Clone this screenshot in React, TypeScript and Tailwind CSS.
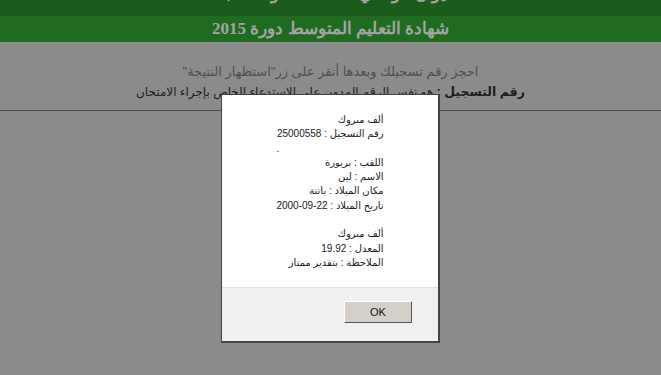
import React from 'react'

const sans = { fontFamily: '"Liberation Sans", "DejaVu Sans", Arial, sans-serif' }

const lines: (string | null)[] = [
  'ألف مبروك',
  'رقم التسجيل : 25000558',
  '.',
  'اللقب : بريورة',
  'الاسم : لين',
  'مكان الميلاد : باتنة',
  'تاريخ الميلاد : 22-09-2000',
  null,
  'ألف مبروك',
  'المعدل : 19.92',
  'الملاحظة : بتقدير ممتاز',
]

export default function App() {
  return (
    <div className="relative w-full h-[375px] overflow-hidden bg-[#8b8b8b] font-['Liberation_Sans','DejaVu_Sans',sans-serif]">
      {/* header bands */}
      <div className="h-[16px] bg-[#1b5b1c] overflow-hidden">
        <div dir="rtl" className="-mt-[19px] text-center font-bold text-[17px] leading-[26px] text-[#a3a3a3] font-['Liberation_Serif','DejaVu_Serif',serif]">
          الديوان الوطني للامتحانات والمسابقات
        </div>
      </div>
      <div dir="rtl" className="h-[26px] bg-[#1f6b20] text-center font-bold text-[17px] leading-[26px] text-[#a3a3a3] font-['Liberation_Serif','DejaVu_Serif',serif]">
        شهادة التعليم المتوسط دورة 2015
      </div>

      {/* instructions */}
      <div dir="rtl" className="pt-[19px] pb-[7px] text-center border-b border-[#4b4b4b]">
        <div className="text-[13px] leading-[21px] text-[#505050]">
          احجز رقم تسجيلك وبعدها أنقر على زر"استظهار النتيجة"
        </div>
        <div className="text-[12px] leading-[21px] text-[#1e1e1e]">
          <span className="font-bold text-[12.5px]">رقم التسجيل :</span> هو نفس الرقم المدون على الاستدعاء الخاص بإجراء الامتحان
        </div>
      </div>

      {/* alert dialog */}
      <div className="absolute left-[221px] top-[94px] w-[219px] h-[249px] border border-[#444444] border-r-2 border-b-2 bg-white flex flex-col">
        <div className="flex-1 pt-[18px]">
          <div dir="rtl" className="w-fit mx-auto text-[10px] leading-[14.3px] text-[#222222]" style={sans}>
            {lines.map((l, i) =>
              l === null ? (
                <div key={i} className="h-[14.3px]" />
              ) : l === '.' ? (
                <div key={i} className="text-left">.</div>
              ) : (
                <div key={i} className="text-right whitespace-nowrap">{l}</div>
              )
            )}
          </div>
        </div>
        <div className="h-[54px] bg-[#f0f0f0] border-t border-[#e2e2e2] flex justify-end items-start pt-[13px] pr-[26px]">
          <button className="w-[68px] h-[22px] bg-[#d4d0c8] border border-t-white border-l-white border-r-[#555555] border-b-[#555555] text-[11px] text-[#111111]" style={sans}>
            OK
          </button>
        </div>
      </div>
    </div>
  )
}
